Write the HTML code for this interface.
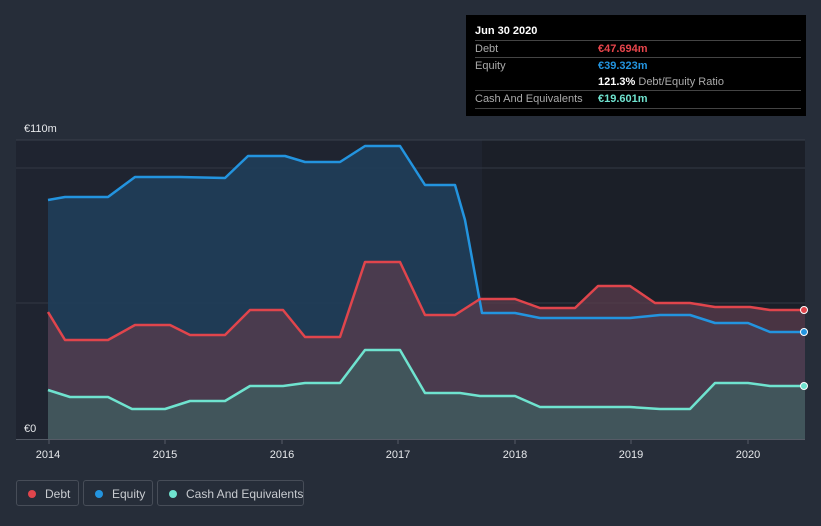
<!DOCTYPE html>
<html><head><style>
body{margin:0;background:#262d39;font-family:"Liberation Sans",sans-serif;}
.wrap{position:relative;width:821px;height:526px;overflow:hidden;}
.tip{position:absolute;left:466px;top:15px;width:340px;height:101px;background:#000;color:#fff;font-size:11px;}
.tip .h{position:absolute;left:9px;top:10px;font-weight:bold;font-size:11px;}
.row{position:absolute;left:9px;width:326px;border-top:1px solid #444;height:17px;line-height:17px;}
.row .l{color:#aaa;position:absolute;left:0}
.row .v{position:absolute;left:123px;font-weight:bold;white-space:nowrap}
.leg{position:absolute;top:480px;height:26px;border:1px solid #474d58;border-radius:3px;color:#c8cbd0;font-size:12px;line-height:26px;box-sizing:border-box;white-space:nowrap;}
.leg i{position:absolute;left:11px;top:9px;width:8px;height:8px;border-radius:50%;}
</style></head><body><div class="wrap">
<svg width="821" height="526" style="position:absolute;left:0;top:0">
<rect x="16" y="140" width="789" height="299" fill="#1f2430"/>
<rect x="482" y="140" width="323" height="299" fill="#1b1f28"/>
<line x1="16" y1="140" x2="805" y2="140" stroke="#3a404b"/>
<line x1="16" y1="168" x2="805" y2="168" stroke="#333945"/>
<line x1="16" y1="303" x2="805" y2="303" stroke="#333945"/>
<polygon fill="#1f3e5a" fill-opacity="0.9" points="48,439 48,200 65,197 108,197 135,177 180,177 225,178 248,156 285,156 305,162 340,162 365,146 400,146 425,185 455,185 465,220 482,313 515,313 540,318 630,318 660,315 690,315 715,323 748,323 770,332 805,332 805,439"/>
<polygon fill="#5a3c4c" fill-opacity="0.75" points="48,439 48,312 65,340 108,340 135,325 170,325 190,335 225,335 250,310 283,310 305,337 340,337 365,262 400,262 425,315 455,315 480,299 515,299 540,308 575,308 598,286 630,286 655,303 690,303 715,307 750,307 770,310 805,310 805,439"/>
<polygon fill="#3f5a5e" fill-opacity="0.85" points="48,439 48,390 70,397 108,397 132,409 165,409 190,401 225,401 250,386 283,386 305,383 340,383 365,350 400,350 425,393 460,393 480,396 515,396 540,407 630,407 660,409 690,409 715,383 748,383 770,386 805,386 805,439"/>
<polyline fill="none" stroke="#2394df" stroke-width="2.5" stroke-linejoin="round" points="48,200 65,197 108,197 135,177 180,177 225,178 248,156 285,156 305,162 340,162 365,146 400,146 425,185 455,185 465,220 482,313 515,313 540,318 630,318 660,315 690,315 715,323 748,323 770,332 805,332"/>
<polyline fill="none" stroke="#e0454c" stroke-width="2.5" stroke-linejoin="round" points="48,312 65,340 108,340 135,325 170,325 190,335 225,335 250,310 283,310 305,337 340,337 365,262 400,262 425,315 455,315 480,299 515,299 540,308 575,308 598,286 630,286 655,303 690,303 715,307 750,307 770,310 805,310"/>
<polyline fill="none" stroke="#6fe3cf" stroke-width="2.5" stroke-linejoin="round" points="48,390 70,397 108,397 132,409 165,409 190,401 225,401 250,386 283,386 305,383 340,383 365,350 400,350 425,393 460,393 480,396 515,396 540,407 630,407 660,409 690,409 715,383 748,383 770,386 805,386"/>
<circle cx="804" cy="310" r="3.5" fill="#e0454c" stroke="#fff" stroke-width="1"/>
<circle cx="804" cy="332" r="3.5" fill="#2394df" stroke="#fff" stroke-width="1"/>
<circle cx="804" cy="386" r="3.5" fill="#6fe3cf" stroke="#fff" stroke-width="1"/>
<line x1="16" y1="439.5" x2="805" y2="439.5" stroke="#555b66"/>
<g stroke="#555b66"><line x1="49" y1="440" x2="49" y2="444"/><line x1="165" y1="440" x2="165" y2="444"/><line x1="282" y1="440" x2="282" y2="444"/><line x1="398" y1="440" x2="398" y2="444"/><line x1="515" y1="440" x2="515" y2="444"/><line x1="631" y1="440" x2="631" y2="444"/><line x1="748" y1="440" x2="748" y2="444"/></g>
<g fill="#e6e8eb" font-size="11" text-anchor="middle" font-family="Liberation Sans"><text x="48" y="458">2014</text><text x="165" y="458">2015</text><text x="282" y="458">2016</text><text x="398" y="458">2017</text><text x="515" y="458">2018</text><text x="631" y="458">2019</text><text x="748" y="458">2020</text></g>
<text x="24" y="132" fill="#e6e8eb" font-size="11" font-family="Liberation Sans">€110m</text>
<text x="24" y="432" fill="#e6e8eb" font-size="11" font-family="Liberation Sans">€0</text>
</svg>
<div class="tip"><div class="h">Jun 30 2020</div>
<div class="row" style="top:25px"><span class="l">Debt</span><span class="v" style="color:#e8454b">€47.694m</span></div>
<div class="row" style="top:42px"><span class="l">Equity</span><span class="v" style="color:#2394df">€39.323m</span></div>
<div class="row" style="top:59px;border-top:none"><span class="v" style="color:#fff">121.3% <span style="color:#aaa;font-weight:normal">Debt/Equity Ratio</span></span></div>
<div class="row" style="top:75px;border-bottom:1px solid #444"><span class="l">Cash And Equivalents</span><span class="v" style="color:#6fe3cf">€19.601m</span></div>
</div>
<div class="leg" style="left:16px;width:63px"><i style="background:#e0454c"></i><span style="position:absolute;left:28px">Debt</span></div>
<div class="leg" style="left:83px;width:70px"><i style="background:#2394df"></i><span style="position:absolute;left:28px">Equity</span></div>
<div class="leg" style="left:157px;width:147px"><i style="background:#6fe3cf"></i><span style="position:absolute;left:28px">Cash And Equivalents</span></div>
</div></body></html>
